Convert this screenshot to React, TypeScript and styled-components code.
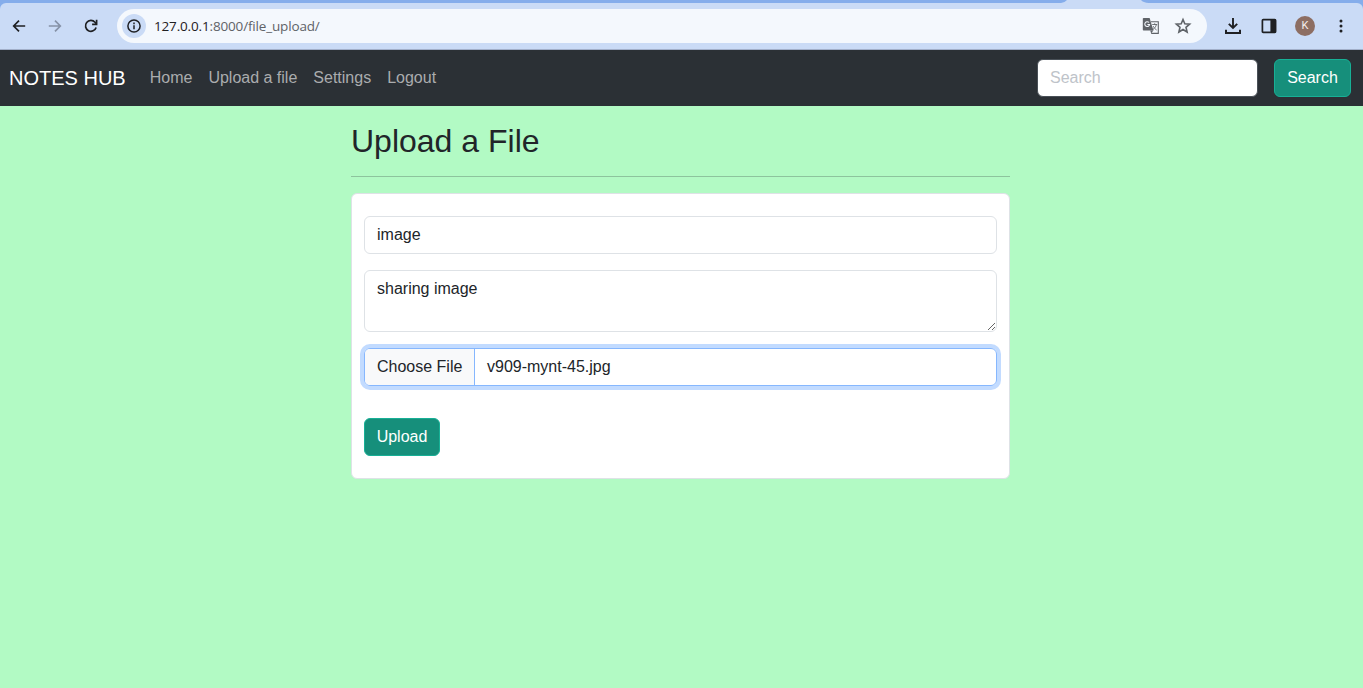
import React from "react";
import styled, { createGlobalStyle } from "styled-components";

const GlobalStyle = createGlobalStyle`
  *, *::before, *::after { box-sizing: border-box; }
  body {
    margin: 0;
    background: #b2fac4;
    color: #212529;
    font: 16px/24px "Liberation Sans", Arial, sans-serif;
    overflow: hidden;
  }
`;

const Page = styled.div`
  min-height: 688px;
  background: #b2fac4;
`;

const Chrome = styled.header`
  height: 50px;
  background: #85adeb;
  border-bottom: 1px solid #a2afc9;
`;

const TabStrip = styled.div`
  height: 3px;
  display: flex;
  justify-content: flex-end;
  padding-right: 214px;
`;

const ActiveTab = styled.svg`
  display: block;
`;

const Toolbar = styled.div`
  height: 46px;
  display: flex;
  align-items: center;
  padding: 0 10px 0 7px;
  background: #cadbf6;
  border-radius: 6px 6px 0 0;
`;

const ToolButton = styled.span<{ $gap?: number; $color?: string }>`
  display: flex;
  flex: none;
  justify-content: center;
  align-items: center;
  width: 24px;
  height: 24px;
  margin-right: ${(p) => p.$gap ?? 12}px;
  color: ${(p) => p.$color ?? "#1f2023"};
`;

const AddressBar = styled.div`
  display: flex;
  flex: 1;
  align-items: center;
  height: 34px;
  margin-right: 14px;
  padding: 0 12px 0 5px;
  border-radius: 17px;
  background: #f4f8fd;
`;

const SiteInfo = styled.span`
  display: flex;
  align-items: center;
  justify-content: center;
  width: 24px;
  height: 24px;
  border-radius: 50%;
  background: #cadbf6;
  color: #1f2023;
`;

const Url = styled.span`
  flex: 1;
  margin-left: 8px;
  font: 13.5px/20px "Open Sans", "Noto Sans", sans-serif;
  letter-spacing: -0.16px;
  color: #5f6368;
`;

const Host = styled.span`
  color: #1f2023;
`;

const Avatar = styled.span`
  display: flex;
  align-items: center;
  justify-content: center;
  width: 20px;
  height: 20px;
  border-radius: 50%;
  background: #8d6e63;
  color: #f6eeeb;
  font: 11px/20px Roboto, sans-serif;
`;

const Navbar = styled.nav`
  display: flex;
  align-items: center;
  height: 56px;
  padding: 0 12px 0 9px;
  background: #2b3035;
`;

const Brand = styled.a`
  margin-right: 24px;
  padding-bottom: 1px;
  font-size: 20px;
  line-height: 30px;
  color: #fff;
`;

const NavLinks = styled.div`
  display: flex;
  flex: 1;
  gap: 16px;
`;

const NavLink = styled.a`
  color: #aaacae;
`;

const SearchInput = styled.input`
  width: 221px;
  height: 38px;
  margin-right: 16px;
  padding: 6px 12px;
  border: 1px solid #495057;
  border-radius: 6px;
  background: #fff;
  font: inherit;
  &::placeholder { color: #bec3c9; opacity: 1; }
`;

const Button = styled.button<{ $width: number }>`
  width: ${(p) => p.$width}px;
  height: 38px;
  padding: 0;
  border: 1px solid #17b096;
  border-radius: 6px;
  background: #168f7b;
  color: #fff;
  font: inherit;
`;

const Main = styled.main`
  width: 659px;
  margin-left: 351px;
  padding-top: 16px;
`;

const Title = styled.h2`
  margin: 0;
  font-size: 32px;
  line-height: 38px;
  font-weight: 400;
`;

const Rule = styled.hr`
  margin: 16px 0;
  border: 0;
  border-top: 1px solid #212529;
  opacity: 0.25;
`;

const Card = styled.form`
  display: flex;
  flex-direction: column;
  align-items: flex-start;
  gap: 16px;
  padding: 22px 12px;
  border: 1px solid #dee2e6;
  border-radius: 6px;
  background: #fff;
`;

const TextInput = styled.input`
  width: 100%;
  height: 38px;
  padding: 6px 12px;
  border: 1px solid #dee2e6;
  border-radius: 6px;
  color: #212529;
  font: inherit;
`;

const TextArea = styled.textarea`
  display: block;
  width: 100%;
  height: 62px;
  padding: 6px 12px;
  border: 1px solid #dee2e6;
  border-radius: 6px;
  color: #212529;
  font: inherit;
  resize: vertical;
`;

const FilePicker = styled.div`
  display: flex;
  width: 100%;
  height: 38px;
  margin-bottom: 16px;
  overflow: hidden;
  border: 1px solid #86b7fe;
  border-radius: 6px;
  box-shadow: 0 0 0 4px #c2dbff;
`;

const ChooseFile = styled.span`
  width: 110px;
  padding: 6px 0 6px 12px;
  border-right: 1px solid #86b7fe;
  background: #f8f9fa;
`;

const FileName = styled.span`
  padding: 6px 12px;
`;

const BackIcon = () => (
  <svg width="16" height="16" viewBox="0 0 16 16" fill="none" stroke="currentColor" strokeWidth="1.7">
    <path d="M14.2 8H3M8 2.7 2.7 8 8 13.3" />
  </svg>
);

const ForwardIcon = () => (
  <svg width="16" height="16" viewBox="0 0 16 16" fill="none" stroke="currentColor" strokeWidth="1.7">
    <path d="M1.8 8H13M8 2.7 13.3 8 8 13.3" />
  </svg>
);

const ReloadIcon = () => (
  <svg width="16" height="16" viewBox="0 0 16 16" fill="none" stroke="currentColor" strokeWidth="1.7">
    <path d="M13.1 9.4A5.4 5.4 0 1 1 12 4.3L13.5 6" />
    <path d="M13.6 1.8V6.3H9.1" />
  </svg>
);

const InfoIcon = () => (
  <svg width="16" height="16" viewBox="0 0 16 16" fill="none" stroke="currentColor" strokeWidth="1.5">
    <circle cx="8" cy="8" r="6.1" />
    <path d="M8 7.2V11.3M8 4.6V6.2" />
  </svg>
);

const TranslateIcon = () => (
  <svg width="18" height="18" viewBox="0 0 18 18" fill="none" stroke="currentColor">
    <path d="M9 4.7H16.3V16.4H9.2" strokeWidth="1.1" />
    <path d="M10.2 7.5H15.2M12.7 6.3V7.5M14.4 7.6C13.9 9.8 12.5 11.4 11 12.4M11.3 9.2C12.2 11 13.3 12.2 14.6 13" strokeWidth="0.9" />
    <path d="M1.6 1H7.6L11.5 13.5H1.6Q.8 13.5.8 12.7V1.8Q.8 1 1.6 1Z" fill="currentColor" stroke="none" />
    <path d="M8.2 13.5H11.3L9.2 16.6Z" fill="currentColor" stroke="none" />
    <path d="M7 5.5A2.4 2.4 0 1 0 7.6 7.5H5.4" stroke="#f4f8fd" strokeWidth="1.1" />
  </svg>
);

const StarIcon = () => (
  <svg width="18" height="18" viewBox="0 0 18 18" fill="none" stroke="currentColor" strokeWidth="1.6">
    <path d="M9 2.5 10.8 6.8 15.6 7.2 12 10.3 13.1 15 9 12.5 4.9 15 6 10.3 2.4 7.2 7.2 6.8Z" />
  </svg>
);

const DownloadIcon = () => (
  <svg width="18" height="18" viewBox="0 0 18 18" fill="none" stroke="currentColor" strokeWidth="2">
    <path d="M9 1V10.5M4.8 6.8 9 11 13.2 6.8" strokeWidth="1.9" />
    <path d="M2 12.8V16H16V12.8" />
  </svg>
);

const SidePanelIcon = () => (
  <svg width="16" height="16" viewBox="0 0 16 16">
    <rect x="1.4" y="1.7" width="13.2" height="12.6" rx="0.8" fill="none" stroke="currentColor" strokeWidth="1.7" />
    <path d="M9.4 1.5h5.6v13H9.4z" fill="currentColor" />
  </svg>
);

const MenuIcon = () => (
  <svg width="16" height="16" viewBox="0 0 16 16" fill="currentColor">
    <circle cx="8" cy="3" r="1.5" />
    <circle cx="8" cy="8" r="1.5" />
    <circle cx="8" cy="13" r="1.5" />
  </svg>
);

export default function App() {
  return (
    <Page>
      <GlobalStyle />
      <Chrome>
        <TabStrip>
          <ActiveTab width="88" height="3" viewBox="0 0 88 3">
            <path d="M0 3Q4 2.5 6 0H80Q82 2.5 88 3Z" fill="#cadbf6" />
          </ActiveTab>
        </TabStrip>
        <Toolbar>
          <ToolButton><BackIcon /></ToolButton>
          <ToolButton $color="#8692a7"><ForwardIcon /></ToolButton>
          <ToolButton $gap={14}><ReloadIcon /></ToolButton>
          <AddressBar>
            <SiteInfo><InfoIcon /></SiteInfo>
            <Url><Host>127.0.0.1</Host>:8000/file_upload/</Url>
            <ToolButton $gap={8} $color="#5f6368"><TranslateIcon /></ToolButton>
            <ToolButton $gap={0} $color="#5f6368"><StarIcon /></ToolButton>
          </AddressBar>
          <ToolButton><DownloadIcon /></ToolButton>
          <ToolButton><SidePanelIcon /></ToolButton>
          <ToolButton><Avatar>K</Avatar></ToolButton>
          <ToolButton $gap={0}><MenuIcon /></ToolButton>
        </Toolbar>
      </Chrome>
      <Navbar>
        <Brand>NOTES HUB</Brand>
        <NavLinks>
          <NavLink>Home</NavLink>
          <NavLink>Upload a file</NavLink>
          <NavLink>Settings</NavLink>
          <NavLink>Logout</NavLink>
        </NavLinks>
        <SearchInput placeholder="Search" />
        <Button $width={77}>Search</Button>
      </Navbar>
      <Main>
        <Title>Upload a File</Title>
        <Rule />
        <Card>
          <TextInput defaultValue="image" />
          <TextArea defaultValue="sharing image" />
          <FilePicker>
            <ChooseFile>Choose File</ChooseFile>
            <FileName>v909-mynt-45.jpg</FileName>
          </FilePicker>
          <Button type="button" $width={76}>Upload</Button>
        </Card>
      </Main>
    </Page>
  );
}
